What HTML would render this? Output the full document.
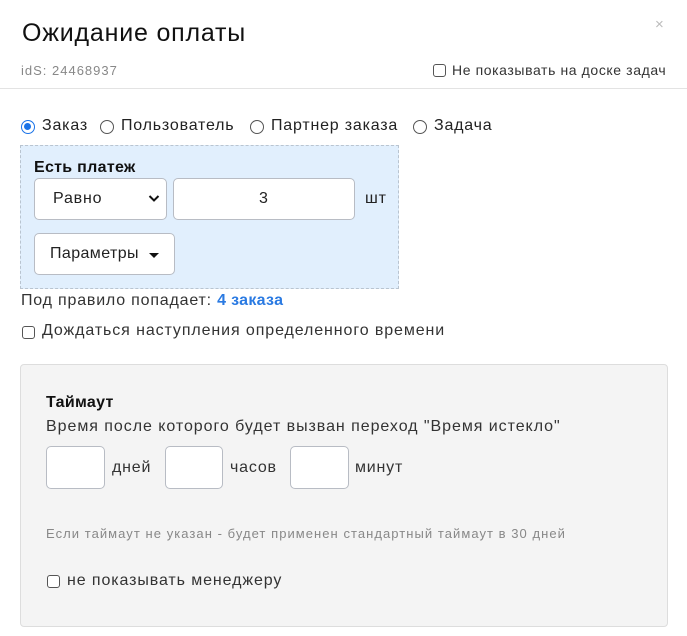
<!DOCTYPE html>
<html><head><meta charset="utf-8"><style>
*{box-sizing:border-box;margin:0;padding:0}
body{width:687px;height:636px;background:#fff;font-family:"Liberation Sans",sans-serif;color:#222;position:relative;overflow:hidden}
.a{position:absolute;white-space:nowrap;letter-spacing:.8px}
.cb{position:absolute;width:13px;height:13px;border:1.5px solid #555;border-radius:3px;background:#fff}
.rd{position:absolute;width:14px;height:14px;border:1.5px solid #555;border-radius:50%;background:#fff}
.in{position:absolute;background:#fff;border:1px solid #b8bcc4;border-radius:5px}
</style></head><body>
<div class="a" style="left:22px;top:19px;font-size:25px;color:#111;letter-spacing:.8px">Ожидание оплаты</div>
<div class="a" style="left:655px;top:16px;font-size:15px;color:#bbb">×</div>
<div class="a" style="left:21px;top:63px;font-size:13px;color:#888;letter-spacing:1px">idS: 24468937</div>
<div class="cb" style="left:433px;top:64px"></div>
<div class="a" style="left:452px;top:62px;font-size:14px;color:#333;letter-spacing:.6px">Не показывать на доске задач</div>
<div style="position:absolute;left:0;top:88px;width:687px;height:1px;background:#e3e3e3"></div>

<div class="rd" style="left:21px;top:120px;border:1.5px solid #1a73e8"><div style="position:absolute;left:2px;top:2px;width:7px;height:7px;border-radius:50%;background:#1a73e8"></div></div>
<div class="a" style="left:42px;top:117px;font-size:16px">Заказ</div>
<div class="rd" style="left:100px;top:120px"></div>
<div class="a" style="left:121px;top:117px;font-size:16px">Пользователь</div>
<div class="rd" style="left:250px;top:120px"></div>
<div class="a" style="left:271px;top:117px;font-size:16px">Партнер заказа</div>
<div class="rd" style="left:413px;top:120px"></div>
<div class="a" style="left:434px;top:117px;font-size:16px">Задача</div>

<div style="position:absolute;left:20px;top:145px;width:379px;height:144px;background:#e1effd;border:1px dashed #b9c4d0"></div>
<div class="a" style="left:34px;top:159px;font-size:16px;font-weight:bold;color:#111;letter-spacing:.3px">Есть платеж</div>
<div class="in" style="left:34px;top:178px;width:133px;height:42px"></div>
<div class="a" style="left:53px;top:190px;font-size:16px">Равно</div>
<svg class="a" style="left:148px;top:194px" width="12" height="9"><path d="M1.5 2 L6 6.5 L10.5 2" fill="none" stroke="#111" stroke-width="2"/></svg>
<div class="in" style="left:173px;top:178px;width:182px;height:42px"></div>
<div class="a" style="left:259px;top:190px;font-size:16px">3</div>
<div class="a" style="left:365px;top:190px;font-size:16px">шт</div>
<div class="in" style="left:34px;top:233px;width:141px;height:42px"></div>
<div class="a" style="left:50px;top:245px;font-size:16px;letter-spacing:.4px">Параметры</div>
<svg class="a" style="left:149px;top:253px" width="10" height="6"><path d="M0 0 L10 0 L5 5Z" fill="#111"/></svg>

<div class="a" style="left:21px;top:292px;font-size:16px;color:#333">Под правило попадает: <b style="color:#2a7ae2;letter-spacing:.3px">4 заказа</b></div>
<div class="cb" style="left:22px;top:326px"></div>
<div class="a" style="left:42px;top:322px;font-size:16px;color:#333;letter-spacing:.9px">Дождаться наступления определенного времени</div>

<div style="position:absolute;left:20px;top:364px;width:648px;height:263px;background:#f4f4f4;border:1px solid #ddd;border-radius:4px"></div>
<div class="a" style="left:46px;top:394px;font-size:16px;font-weight:bold;color:#111;letter-spacing:.3px">Таймаут</div>
<div class="a" style="left:46px;top:418px;font-size:16px;color:#333;letter-spacing:.95px">Время после которого будет вызван переход "Время истекло"</div>
<div class="in" style="left:46px;top:446px;width:59px;height:43px"></div>
<div class="a" style="left:112px;top:459px;font-size:16px;color:#333">дней</div>
<div class="in" style="left:165px;top:446px;width:58px;height:43px"></div>
<div class="a" style="left:230px;top:459px;font-size:16px;color:#333">часов</div>
<div class="in" style="left:290px;top:446px;width:59px;height:43px"></div>
<div class="a" style="left:355px;top:459px;font-size:16px;color:#333">минут</div>
<div class="a" style="left:46px;top:526px;font-size:13px;color:#888;letter-spacing:1.05px">Если таймаут не указан - будет применен стандартный таймаут в 30 дней</div>
<div class="cb" style="left:47px;top:575px"></div>
<div class="a" style="left:67px;top:572px;font-size:16px;color:#333;letter-spacing:.9px">не показывать менеджеру</div>
</body></html>
